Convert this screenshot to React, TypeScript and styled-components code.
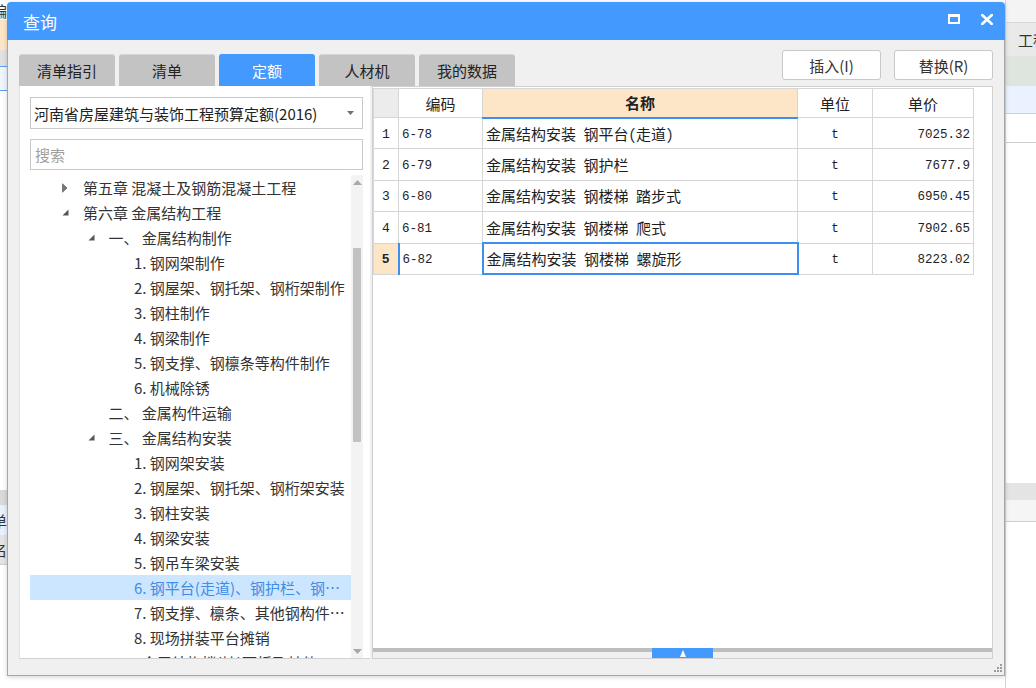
import React from "react";
import styled, { createGlobalStyle } from "styled-components";

const GlobalStyle = createGlobalStyle`
  html, body { margin: 0; padding: 0; background: #ffffff; }
  body { font-family: "Noto Sans CJK SC", "Noto Sans", sans-serif; -webkit-font-smoothing: antialiased; }
  * { box-sizing: border-box; }
`;

const CJK = `"Noto Sans CJK SC", "Noto Sans", sans-serif`;
const MONO = `"Liberation Mono", "DejaVu Sans Mono", monospace`;
const BLUE = "#4499ff";
const SEL = "#3d8ff2";
const PEACH = "#fde6c8";

const Screen = styled.div`
  position: relative;
  width: 1036px;
  height: 688px;
  overflow: hidden;
  background: #fff;
  font-family: ${CJK};
`;

/* ---------- background application (partly visible) ---------- */
const Backdrop = styled.div`
  display: flex;
  height: 100%;
`;
const BackPane = styled.div<{ $w?: number }>`
  display: flex;
  flex-direction: column;
  width: ${(p) => (p.$w ? `${p.$w}px` : "auto")};
  flex: ${(p) => (p.$w ? "none" : "1")};
  overflow: hidden;
  border-left: ${(p) => (p.$w ? "none" : "1px solid #d4d4d4")};
`;
const BackBand = styled.div<{ $h: number; $bg: string; $line?: string; $top?: string }>`
  flex: none;
  height: ${(p) => p.$h}px;
  background: ${(p) => p.$bg};
  border-bottom: ${(p) => (p.$line ? `1px solid ${p.$line}` : "none")};
  border-top: ${(p) => (p.$top ? `1px solid ${p.$top}` : "none")};
  display: flex;
  align-items: center;
  font-size: 15px;
  color: #333;
  white-space: nowrap;
`;
const BackFill = styled.div`
  flex: 1;
`;
const CutLabel = styled.span<{ $pad?: number }>`
  margin-left: ${(p) => (p.$pad !== undefined ? p.$pad : -8)}px;
`;

/* ---------- dialog window ---------- */
const Dialog = styled.section`
  position: absolute;
  left: 7px;
  top: 2px;
  width: 998px;
  height: 674px;
  display: flex;
  flex-direction: column;
  box-shadow: 0 1px 5px rgba(0, 0, 0, 0.18);
  border-radius: 4px 4px 0 0;
`;
const TitleBar = styled.header`
  flex: none;
  height: 38px;
  background: ${BLUE};
  border-radius: 4px 4px 0 0;
  display: flex;
  align-items: center;
  padding: 0 12px 0 16px;
  color: #fff;
`;
const Title = styled.h1`
  margin: 0;
  flex: 1;
  font-size: 17px;
  font-weight: 400;
`;
const WinButtons = styled.div`
  display: flex;
  align-items: center;
  gap: 21px;
  margin-top: -4px;
`;
const Body = styled.div`
  flex: 1;
  display: flex;
  flex-direction: column;
  background: #f0f0f0;
  border: 1px solid #a6a6a6;
  border-top: none;
  padding: 10px 11px 0 11px;
  min-height: 0;
`;
const ToolRow = styled.div`
  flex: none;
  height: 36px;
  display: flex;
  justify-content: space-between;
`;
const Tabs = styled.nav`
  display: flex;
  gap: 4px;
  align-self: flex-end;
`;
const Tab = styled.div<{ $active?: boolean }>`
  width: 96px;
  height: 32px;
  border-radius: 3px 3px 0 0;
  background: ${(p) => (p.$active ? BLUE : "#c3c3c3")};
  color: ${(p) => (p.$active ? "#fff" : "#222")};
  font-size: 15px;
  display: flex;
  align-items: center;
  justify-content: center;
  border-top: 1px solid ${(p) => (p.$active ? BLUE : "#d6d6d6")};
`;
const Actions = styled.div`
  display: flex;
  gap: 13px;
  align-self: flex-start;
`;
const ActionButton = styled.button`
  width: 99px;
  height: 30px;
  background: #fff;
  border: 1px solid #c8c8c8;
  border-radius: 3px;
  font-family: ${CJK};
  font-size: 15px;
  color: #333;
  padding: 0;
`;
const Content = styled.div`
  flex: 1;
  display: flex;
  gap: 2px;
  min-height: 0;
`;

/* ---------- left: quota tree ---------- */
const LeftPane = styled.aside`
  width: 351px;
  flex: none;
  background: #fff;
  border-left: 1px solid #e2e2e2;
  border-bottom: 1px solid #d2d2d2;
  padding: 11px 7px 0 10px;
  display: flex;
  flex-direction: column;
  min-height: 0;
`;
const Select = styled.div`
  flex: none;
  height: 32px;
  border: 1px solid #c9c9c9;
  display: flex;
  align-items: center;
  padding: 0 8px 0 3px;
  font-size: 15px;
  color: #222;
  background: #fff;
`;
const SelectText = styled.span`
  flex: 1;
  white-space: nowrap;
`;
const SearchBox = styled.div`
  flex: none;
  height: 31px;
  margin-top: 10px;
  border: 1px solid #c9c9c9;
  display: flex;
  align-items: center;
  padding-left: 4px;
  font-size: 15px;
  color: #a0a0a0;
`;
const TreeArea = styled.div`
  flex: 1;
  margin-top: 5px;
  display: flex;
  min-height: 0;
  overflow: hidden;
`;
const TreeList = styled.ul`
  flex: 1;
  margin: 0;
  padding: 0;
  list-style: none;
  min-width: 0;
`;
const TreeRow = styled.li<{ $level: number; $selected?: boolean }>`
  height: 25px;
  display: flex;
  align-items: center;
  padding-left: ${(p) => 32 + p.$level * 25.5}px;
  padding-right: 6px;
  font-size: 15px;
  color: ${(p) => (p.$selected ? "#3f8de6" : "#333")};
  background: ${(p) => (p.$selected ? "#cce6ff" : "transparent")};
  white-space: pre;
`;
const Toggle = styled.span`
  width: 21px;
  flex: none;
  display: flex;
  align-items: center;
`;
const TreeText = styled.span`
  overflow: hidden;
  text-overflow: ellipsis;
  min-width: 0;
`;
const VScroll = styled.div`
  width: 12px;
  flex: none;
  background: #f3f3f3;
  display: flex;
  flex-direction: column;
  align-items: center;
`;
const ScrollArrow = styled.div`
  height: 14px;
  flex: none;
  display: flex;
  align-items: center;
  justify-content: center;
`;
const ScrollTrack = styled.div`
  flex: 1;
  width: 100%;
  display: flex;
  justify-content: center;
`;
const Thumb = styled.div`
  width: 8px;
  height: 194px;
  margin-top: 59px;
  background: #c2c2c2;
  border-radius: 1px;
`;

/* ---------- right: result grid ---------- */
const RightPane = styled.section`
  flex: 1;
  background: #fff;
  border: 1px solid #d0d0d0;
  display: flex;
  flex-direction: column;
  min-width: 0;
`;
const Grid = styled.table`
  margin-top: 1px;
  width: 600px;
  border-collapse: collapse;
  table-layout: fixed;
`;
const HeadCell = styled.th<{ $active?: boolean; $corner?: boolean }>`
  height: 29px;
  padding: 0;
  border: 1px solid #d6d6d6;
  border-bottom: ${(p) => (p.$active ? `2px solid ${SEL}` : "1px solid #d6d6d6")};
  background: ${(p) => (p.$active ? PEACH : p.$corner ? "#ececec" : "#fff")};
  font-family: ${CJK};
  font-size: 15px;
  font-weight: ${(p) => (p.$active ? 700 : 400)};
  color: #222;
  text-align: center;
`;
const BodyRow = styled.tr`
  height: 31.4px;
`;
const NumCell = styled.td<{ $current?: boolean }>`
  padding: 2px 0 0;
  border: 1px solid #d6d6d6;
  border-right: ${(p) => (p.$current ? `2px solid ${SEL}` : "1px solid #d6d6d6")};
  background: ${(p) => (p.$current ? PEACH : "#fff")};
  font-family: ${MONO};
  font-size: 13px;
  font-weight: ${(p) => (p.$current ? 700 : 400)};
  color: #222;
  text-align: center;
`;
const Cell = styled.td<{ $align?: "left" | "center" | "right"; $mono?: boolean; $focus?: boolean }>`
  padding: ${(p) => (p.$mono ? "3px 3px 0" : "0 3px")};
  border: ${(p) => (p.$focus ? `2px solid ${SEL}` : "1px solid #d6d6d6")};
  font-family: ${(p) => (p.$mono ? MONO : `"Noto Sans Mono CJK SC", ${CJK}`)};
  font-size: ${(p) => (p.$mono ? "12.5px" : "15px")};
  color: #1e1e1e;
  text-align: ${(p) => p.$align || "left"};
  white-space: pre;
  overflow: hidden;
`;
const GridFill = styled.div`
  flex: 1;
`;
const Splitter = styled.div`
  flex: none;
  height: 10px;
  display: flex;
  justify-content: center;
  background: linear-gradient(#bdbdbd 0 4px, #f0f0f0 4px 100%);
`;
const SplitHandle = styled.div`
  width: 61px;
  height: 10px;
  background: ${BLUE};
  display: flex;
  align-items: center;
  justify-content: center;
`;
const Footer = styled.div`
  flex: none;
  height: 16px;
  display: flex;
  justify-content: flex-end;
  align-items: flex-end;
  margin-right: -9px;
  padding-bottom: 3px;
`;

/* ---------- icons ---------- */
const MaxIcon = () => (
  <svg width="12" height="10" viewBox="0 0 12 10">
    <rect x="1" y="1.5" width="10" height="7.5" fill="none" stroke="#fff" strokeWidth="2" />
    <rect x="0" y="0" width="12" height="3" fill="#fff" />
  </svg>
);
const CloseIcon = () => (
  <svg width="12" height="11" viewBox="0 0 12 11">
    <path d="M1.2 1 L10.8 10 M10.8 1 L1.2 10" stroke="#fff" strokeWidth="2.6" strokeLinecap="square" />
  </svg>
);
const CaretDown = () => (
  <svg width="7" height="4" viewBox="0 0 7 4">
    <path d="M0 0 H7 L3.5 4 Z" fill="#707070" />
  </svg>
);
const ArrowClosed = () => (
  <svg width="6" height="10" viewBox="0 0 6 10">
    <path d="M0.5 0.8 L5 5 L0.5 9.2 Z" fill="#777" stroke="#6a6a6a" strokeWidth="0.8" />
  </svg>
);
const ArrowOpen = () => (
  <svg width="7" height="7" viewBox="0 0 7 7">
    <path d="M6.5 0.5 V6.5 H0.5 Z" fill="#555" />
  </svg>
);
const ScrollUp = () => (
  <svg width="9" height="5" viewBox="0 0 9 5">
    <path d="M0 5 L4.5 0 L9 5 Z" fill="#a8a8a8" />
  </svg>
);
const ScrollDown = () => (
  <svg width="9" height="5" viewBox="0 0 9 5">
    <path d="M0 0 L4.5 5 L9 0 Z" fill="#a8a8a8" />
  </svg>
);
const SplitArrow = () => (
  <svg width="6" height="7" viewBox="0 0 6 7">
    <path d="M3 0 L6 7 H0 Z" fill="#fff" />
  </svg>
);
const Grip = () => (
  <svg width="9" height="9" viewBox="0 0 9 9">
    {[
      [7, 1], [4, 4], [7, 4], [1, 7], [4, 7], [7, 7],
    ].map(([x, y]) => (
      <rect key={`${x}-${y}`} x={x} y={y} width="2" height="2" fill="#9a9a9a" />
    ))}
  </svg>
);

/* ---------- data ---------- */
type Node = { level: number; text: string; toggle?: "open" | "closed"; selected?: boolean };
const tree: Node[] = [
  { level: 0, toggle: "closed", text: "第五章 混凝土及钢筋混凝土工程" },
  { level: 0, toggle: "open", text: "第六章 金属结构工程" },
  { level: 1, toggle: "open", text: "一、 金属结构制作" },
  { level: 2, text: "1. 钢网架制作" },
  { level: 2, text: "2. 钢屋架、钢托架、钢桁架制作" },
  { level: 2, text: "3. 钢柱制作" },
  { level: 2, text: "4. 钢梁制作" },
  { level: 2, text: "5. 钢支撑、钢檩条等构件制作" },
  { level: 2, text: "6. 机械除锈" },
  { level: 1, text: "二、 金属构件运输" },
  { level: 1, toggle: "open", text: "三、 金属结构安装" },
  { level: 2, text: "1. 钢网架安装" },
  { level: 2, text: "2. 钢屋架、钢托架、钢桁架安装" },
  { level: 2, text: "3. 钢柱安装" },
  { level: 2, text: "4. 钢梁安装" },
  { level: 2, text: "5. 钢吊车梁安装" },
  { level: 2, text: "6. 钢平台(走道)、钢护栏、钢楼梯安装", selected: true },
  { level: 2, text: "7. 钢支撑、檩条、其他钢构件安装" },
  { level: 2, text: "8. 现场拼装平台摊销" },
  { level: 1, text: "四、 金属结构楼(墙)面板及其他" },
];

const rows = [
  { code: "6-78", name: "金属结构安装 钢平台(走道)", unit: "t", price: "7025.32" },
  { code: "6-79", name: "金属结构安装 钢护栏", unit: "t", price: "7677.9" },
  { code: "6-80", name: "金属结构安装 钢楼梯 踏步式", unit: "t", price: "6950.45" },
  { code: "6-81", name: "金属结构安装 钢楼梯 爬式", unit: "t", price: "7902.65" },
  { code: "6-82", name: "金属结构安装 钢楼梯 螺旋形", unit: "t", price: "8223.02" },
];

const tabs = ["清单指引", "清单", "定额", "人材机", "我的数据"];

export default function App() {
  return (
    <Screen>
      <GlobalStyle />
      <Backdrop>
        <BackPane $w={1005}>
          <BackBand $h={20} $bg="#fff">
            <CutLabel>编</CutLabel>
          </BackBand>
          <BackBand $h={30} $bg={PEACH} />
          <BackBand $h={16} $bg="#e1e1e1" />
          <BackBand $h={25} $bg="#eef5ff" $top="#5b9ff0" $line="#5b9ff0" />
          <BackFill />
          <BackBand $h={15} $bg="#d9d9d9" />
          <BackBand $h={30} $bg="#e9f1fb">
            <CutLabel>单</CutLabel>
          </BackBand>
          <BackBand $h={30} $bg="#e4e4e4" $line="#cfcfcf">
            <CutLabel>名</CutLabel>
          </BackBand>
          <BackBand $h={123} $bg="#fff" />
        </BackPane>
        <BackPane>
          <BackBand $h={22} $bg="#f4f4f4" />
          <BackBand $h={34} $bg="#e9e9e9" $top="#d8d8d8">
            <CutLabel $pad={12}>工程量表达式</CutLabel>
          </BackBand>
          <BackBand $h={30} $bg="#dde5de" />
          <BackBand $h={28} $bg="#eaf2ff" $line="#d0d0d0" />
          <BackBand $h={29} $bg="#fff" $line="#cfcfcf" />
          <BackFill />
          <BackBand $h={17} $bg="#e4e4e4" />
          <BackBand $h={22} $bg="#f5f5f5" $line="#cfcfcf" />
          <BackBand $h={166} $bg="#fff" />
        </BackPane>
      </Backdrop>

      <Dialog>
        <TitleBar>
          <Title>查询</Title>
          <WinButtons>
            <MaxIcon />
            <CloseIcon />
          </WinButtons>
        </TitleBar>
        <Body>
          <ToolRow>
            <Tabs>
              {tabs.map((t) => (
                <Tab key={t} $active={t === "定额"}>
                  {t}
                </Tab>
              ))}
            </Tabs>
            <Actions>
              <ActionButton>插入(I)</ActionButton>
              <ActionButton>替换(R)</ActionButton>
            </Actions>
          </ToolRow>
          <Content>
            <LeftPane>
              <Select>
                <SelectText>河南省房屋建筑与装饰工程预算定额(2016)</SelectText>
                <CaretDown />
              </Select>
              <SearchBox>搜索</SearchBox>
              <TreeArea>
                <TreeList>
                  {tree.map((n, i) => (
                    <TreeRow key={i} $level={n.level} $selected={n.selected}>
                      <Toggle>
                        {n.toggle === "closed" && <ArrowClosed />}
                        {n.toggle === "open" && <ArrowOpen />}
                      </Toggle>
                      <TreeText>{n.text}</TreeText>
                    </TreeRow>
                  ))}
                </TreeList>
                <VScroll>
                  <ScrollArrow>
                    <ScrollUp />
                  </ScrollArrow>
                  <ScrollTrack>
                    <Thumb />
                  </ScrollTrack>
                  <ScrollArrow>
                    <ScrollDown />
                  </ScrollArrow>
                </VScroll>
              </TreeArea>
            </LeftPane>
            <RightPane>
              <Grid>
                <colgroup>
                  <col style={{ width: 25 }} />
                  <col style={{ width: 84 }} />
                  <col style={{ width: 315 }} />
                  <col style={{ width: 75 }} />
                  <col style={{ width: 101 }} />
                </colgroup>
                <thead>
                  <tr>
                    <HeadCell $corner />
                    <HeadCell>编码</HeadCell>
                    <HeadCell $active>名称</HeadCell>
                    <HeadCell>单位</HeadCell>
                    <HeadCell>单价</HeadCell>
                  </tr>
                </thead>
                <tbody>
                  {rows.map((r, i) => {
                    const current = i === rows.length - 1;
                    return (
                      <BodyRow key={r.code}>
                        <NumCell $current={current}>{i + 1}</NumCell>
                        <Cell $mono>{r.code}</Cell>
                        <Cell $focus={current}>{r.name}</Cell>
                        <Cell $mono $align="center">{r.unit}</Cell>
                        <Cell $mono $align="right">{r.price}</Cell>
                      </BodyRow>
                    );
                  })}
                </tbody>
              </Grid>
              <GridFill />
              <Splitter>
                <SplitHandle>
                  <SplitArrow />
                </SplitHandle>
              </Splitter>
            </RightPane>
          </Content>
          <Footer>
            <Grip />
          </Footer>
        </Body>
      </Dialog>
    </Screen>
  );
}
